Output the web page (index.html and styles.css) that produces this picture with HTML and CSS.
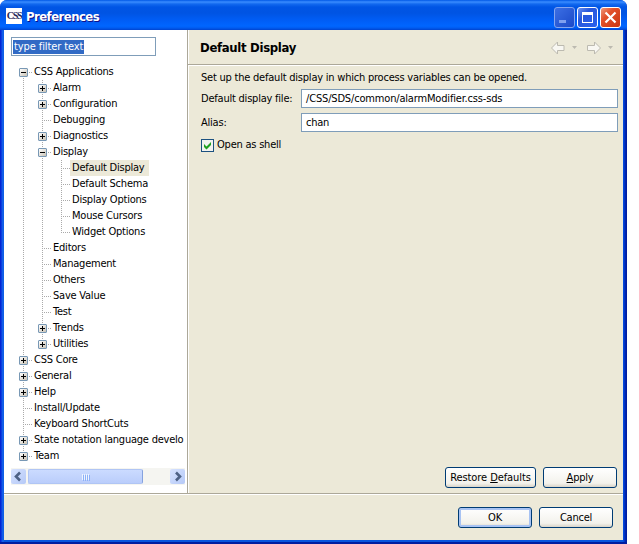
FILE: index.html
```
<!DOCTYPE html>
<html lang="en">
<head>
<meta charset="utf-8">
<title>Preferences</title>
<link rel="stylesheet" href="styles.css">
</head>
<body>
<div class="window">
  <header class="titlebar">
    <span class="logo">CSS</span>
    <h1>Preferences</h1>
    <div class="controls">
      <svg class="ctl min" viewBox="0 0 19 19"><rect x="4" y="12" width="7" height="3" fill="#7fa0f0"/></svg>
      <svg class="ctl max" viewBox="0 0 19 19"><path d="M4 4h11v11H4zM5 7v7h9V7z" fill="#fff" fill-rule="evenodd"/></svg>
      <svg class="ctl close" viewBox="0 0 19 19"><path d="M4.500 4.500l10 10M14.500 4.500l-10 10" stroke="#fff" stroke-width="2.200" fill="none"/></svg>
    </div>
  </header>
  <div class="client">
    <div class="upper">
      <aside>
        <div class="filter"><span>type filter text</span></div>
        <ul class="tree">
          <li><div class="row"><i class="box minus"></i><span>CSS Applications</span></div>
            <ul>
              <li><div class="row"><i class="box plus"></i><span>Alarm</span></div></li>
              <li><div class="row"><i class="box plus"></i><span>Configuration</span></div></li>
              <li><div class="row"><span>Debugging</span></div></li>
              <li><div class="row"><i class="box plus"></i><span>Diagnostics</span></div></li>
              <li><div class="row"><i class="box minus"></i><span>Display</span></div>
                <ul>
                  <li><div class="row"><span class="selected">Default Display</span></div></li>
                  <li><div class="row"><span>Default Schema</span></div></li>
                  <li><div class="row"><span>Display Options</span></div></li>
                  <li><div class="row"><span>Mouse Cursors</span></div></li>
                  <li><div class="row"><span>Widget Options</span></div></li>
                </ul>
              </li>
              <li><div class="row"><span>Editors</span></div></li>
              <li><div class="row"><span>Management</span></div></li>
              <li><div class="row"><span>Others</span></div></li>
              <li><div class="row"><span>Save Value</span></div></li>
              <li><div class="row"><span>Test</span></div></li>
              <li><div class="row"><i class="box plus"></i><span>Trends</span></div></li>
              <li><div class="row"><i class="box plus"></i><span>Utilities</span></div></li>
            </ul>
          </li>
          <li><div class="row"><i class="box plus"></i><span>CSS Core</span></div></li>
          <li><div class="row"><i class="box plus"></i><span>General</span></div></li>
          <li><div class="row"><i class="box plus"></i><span>Help</span></div></li>
          <li><div class="row"><span>Install/Update</span></div></li>
          <li><div class="row"><span>Keyboard ShortCuts</span></div></li>
          <li><div class="row"><i class="box plus"></i><span class="long">State notation language develo</span></div></li>
          <li><div class="row"><i class="box plus"></i><span>Team</span></div></li>
        </ul>
        <div class="scrollbar">
          <svg class="arrow" viewBox="0 0 15 15"><path d="M9 3.500L5 7.500l4 4" fill="none" stroke="#4d6185" stroke-width="2.600"/></svg>
          <div class="thumb"><i></i><i></i><i></i><i></i></div>
          <svg class="arrow end" viewBox="0 0 15 15"><path d="M6 3.500l4 4-4 4" fill="none" stroke="#4d6185" stroke-width="2.600"/></svg>
        </div>
      </aside>
      <main>
        <div class="heading">
          <h2>Default Display</h2>
          <svg class="nav" width="64" height="14" viewBox="0 0 64 14">
            <g fill="#f8f7f2" stroke="#bcbab0" stroke-width="1">
              <path d="M1.500 7l6-6v3.500h6.500v5H7.500V13z"/>
              <path d="M50.500 7l-6-6v3.500H37.500v5h7V13z"/>
            </g>
            <path d="M22 5h5l-2.500 3zM58 5h5l-2.500 3z" fill="#bcbab0"/>
          </svg>
        </div>
        <div class="form">
          <p>Set up the default display in which process variables can be opened.</p>
          <div class="field"><label>Default display file:</label><div class="input path">/CSS/SDS/common/alarmModifier.css-sds</div></div>
          <div class="field alias"><label>Alias:</label><div class="input">chan</div></div>
          <div class="check"><svg width="13" height="13" viewBox="0 0 13 13"><rect x=".5" y=".5" width="12" height="12" fill="#f3f3ef" stroke="#1c5180"/><path d="M3 5v3l2.500 2.500L10 6V3L5.500 7.500z" fill="#21a121"/></svg><span>Open as shell</span></div>
        </div>
        <div class="actions"><button class="restore">Restore <u>D</u>efaults</button><button><u>A</u>pply</button></div>
      </main>
    </div>
    <footer><button class="default">OK</button><button>Cancel</button></footer>
  </div>
</div>
</body>
</html>
```
FILE: styles.css
```
* { box-sizing: border-box; }
body {
  margin: 0;
  background: #fff;
  color: #000;
  font: 11px/16px "DejaVu Sans Condensed", "DejaVu Sans", sans-serif;
  font-stretch: condensed;
  letter-spacing: -0.22px;
  white-space: nowrap;
  overflow: hidden;
}
h1, h2, p, ul { margin: 0; padding: 0; }
ul { list-style: none; }
.window {
  width: 627px;
  height: 544px;
  display: flex;
  flex-direction: column;
  padding: 0 4px 4px;
  border-radius: 7px 7px 0 0;
  background: linear-gradient(90deg, #0019cf 0, #0831d9 1px, #166aee 3px, #0855dd 4px, #0855dd 623px, #003dd7 624px, #001ea0 626px);
  box-shadow: inset 0 -2px #001da0;
}
.titlebar {
  height: 30px;
  margin: 0 -4px;
  padding: 4px 6px 0;
  display: flex;
  align-items: center;
  border-radius: 7px 7px 0 0;
  background: linear-gradient(#0058e6 0, #3a8cff 2px, #1269ef 4px, #0055e5 7px, #0054e3 13px, #005df5 20px, #0066ff 26px, #005bf0 28px, #0043cf 30px);
}
.logo {
  width: 16px;
  height: 16px;
  margin-top: -2px;
  overflow: hidden;
  background: #fff;
  color: #28285a;
  font: bold 10px/16px "Liberation Serif", serif;
  letter-spacing: -1.2px;
  text-align: center;
}
h1 {
  margin: 0 0 0 4px;
  color: #fff;
  font: bold 13px/18px "DejaVu Sans Condensed", "DejaVu Sans", sans-serif;
  font-stretch: condensed;
  letter-spacing: -0.55px;
  text-shadow: 1px 1px #0f1089;
}
.controls { display: flex; gap: 2px; margin-left: auto; }
.ctl {
  width: 21px;
  height: 21px;
  border: 1px solid #fff;
  border-radius: 3px;
  background: linear-gradient(135deg, #6d92f0, #2857db 35%, #2a62ee);
}
.min { border-color: #84a5f0; background: linear-gradient(135deg, #3c6fe4, #1b49c8); }
.close { background: linear-gradient(135deg, #ee987c, #e2512b 35%, #c93510); }
.client { flex: 1; display: flex; flex-direction: column; background: #ece9d8; }
.upper { height: 463px; display: flex; }
aside {
  width: 183px;
  padding: 7px 0 0 7px;
  background: #fff;
  display: flex;
  flex-direction: column;
}
.filter { width: 145px; height: 19px; padding: 2px 1px; border: 1px solid #7f9db9; line-height: 14px; }
.filter span { display: inline-block; height: 14px; padding: 0 1px; background: #316ac5; color: #fff; line-height: 14px; letter-spacing: -0.1px; }
.tree { width: 174px; height: 412px; padding: 8px 0 0 8px; overflow: hidden; }
.tree ul { margin-left: 19px; }
.tree li { position: relative; }
.tree li::before {
  content: "";
  position: absolute;
  top: 0;
  bottom: 0;
  left: 4px;
  width: 1px;
  background: repeating-linear-gradient(#aaa 0 1px, transparent 1px 2px);
}
.tree > li:first-child::before { top: 8px; }
.tree li:last-child::before { bottom: auto; height: 8px; }
.row {
  position: relative;
  height: 16px;
  padding-left: 13px;
  background: repeating-linear-gradient(90deg, #aaa 0 1px, transparent 1px 2px) 4px 8px / 9px 1px no-repeat;
}
.row span { display: inline-block; height: 16px; padding: 0 5px 0 2px; vertical-align: top; }
.row .selected { background: #ece9d8; }
.row .long { padding-right: 0; }
.box {
  position: absolute;
  left: 0;
  top: 4px;
  width: 9px;
  height: 9px;
  border: 1px solid #7898b5;
  border-radius: 1px;
  background: linear-gradient(#000, #000) center / 5px 1px no-repeat, linear-gradient(135deg, #fff, #c9c2b4);
}
.plus { background: linear-gradient(#000, #000) center / 5px 1px no-repeat, linear-gradient(#000, #000) center / 1px 5px no-repeat, linear-gradient(135deg, #fff, #c9c2b4); }
.scrollbar { width: 174px; height: 17px; display: flex; align-items: center; background: #f5f5f1; }
.arrow { width: 15px; height: 15px; border-radius: 2px; background: linear-gradient(135deg, #d6e2ff, #b5c9f7); }
.end { margin-left: auto; }
.thumb {
  width: 115px;
  height: 15px;
  margin-left: 2px;
  display: flex;
  align-items: center;
  justify-content: center;
  gap: 1px;
  border: 1px solid #b0c5f4;
  border-right-color: #85a2df;
  border-radius: 2px;
  background: linear-gradient(#cbdbff, #bacdfb);
}
.thumb i { width: 1px; height: 6px; background: #eef4fe; box-shadow: 1px 1px #8cb0f8; }
main {
  flex: 1;
  display: flex;
  flex-direction: column;
  border-left: 1px solid #aca899;
  box-shadow: inset 1px 0 #fff;
}
.heading {
  height: 36px;
  padding: 0 9px 0 12px;
  display: flex;
  align-items: center;
  justify-content: space-between;
  border-bottom: 1px solid #fff;
  box-shadow: inset 0 -1px #aca899;
}
h2 { font-size: 13px; line-height: 20px; letter-spacing: -0.32px; }
.form { padding: 4px 5px 0 13px; }
p { height: 19px; line-height: 16px; }
.field { display: flex; align-items: center; height: 19px; }
.field label { width: 100px; }
.alias { margin-top: 5px; }
.input { flex: 1; height: 19px; padding-left: 4px; border: 1px solid #7f9db9; background: #fff; line-height: 17px; }
.path { letter-spacing: -0.17px; }
.check { display: flex; align-items: center; gap: 3px; margin-top: 5px; height: 16px; }
.actions { display: flex; gap: 7px; justify-content: flex-end; margin: auto 6px 5px 0; }
button {
  width: 74px;
  height: 21px;
  padding: 0;
  border: 1px solid #003c74;
  border-radius: 3px;
  background: linear-gradient(#fff, #f3f2ec 80%, #d9d4c8);
  color: #000;
  font: inherit;
  letter-spacing: inherit;
  line-height: 18px;
}
.restore { width: 91px; letter-spacing: -0.08px; }
.default { box-shadow: inset 0 0 0 2px #a8c3f3; }
footer {
  flex: 1;
  display: flex;
  gap: 7px;
  justify-content: flex-end;
  padding: 13px 10px 0 0;
  border-top: 1px solid #aca899;
  box-shadow: inset 0 1px #fff;
}
```
